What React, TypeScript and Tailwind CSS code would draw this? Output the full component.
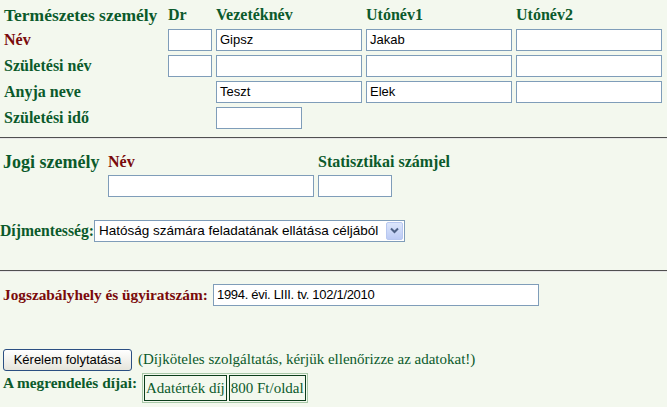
import React from "react";

const serif = "font-[family-name:Liberation_Serif,Times_New_Roman,serif]";
const sans = "font-[family-name:Liberation_Sans,Arial,sans-serif]";

function TextBox({ value = "", className = "" }: { value?: string; className?: string }) {
    return (
        <div
            className={`h-[22px] shrink-0 border border-[#7f9db9] bg-white px-[3px] text-[13px] leading-[20px] text-black ${sans} ${className}`}
        >
            {value}
        </div>
    );
}

const personRows = [
    { label: "Név", red: true, dr: true, values: ["Gipsz", "Jakab", ""] },
    { label: "Születési név", red: false, dr: true, values: ["", "", ""] },
    { label: "Anyja neve", red: false, dr: false, values: ["Teszt", "Elek", ""] },
];

export default function App() {
    return (
        <div className={`min-h-[407px] w-[667px] bg-[#f3f8ee] text-[#0b5a2b] ${serif}`}>
            {/* Természetes személy */}
            <div className="pl-[4px] pt-[3px]">
                <div className="flex h-[24px] items-center whitespace-nowrap font-bold">
                    <div className="w-[164px] text-[17.5px]">Természetes személy</div>
                    <div className="w-[48px] text-[16px]">Dr</div>
                    <div className="w-[150px] text-[16px]">Vezetéknév</div>
                    <div className="w-[150px] text-[16px]">Utónév1</div>
                    <div className="text-[16px]">Utónév2</div>
                </div>
                {personRows.map((row) => (
                    <div key={row.label} className="flex h-[26px] items-center">
                        <div className={`w-[164px] text-[16px] font-bold ${row.red ? "text-[#7a0a0a]" : ""}`}>
                            {row.label}
                        </div>
                        <div className="w-[48px]">{row.dr && <TextBox className="w-[44px]" />}</div>
                        <div className="flex gap-[4px]">
                            {row.values.map((v, i) => (
                                <TextBox key={i} value={v} className="w-[146px]" />
                            ))}
                        </div>
                    </div>
                ))}
                <div className="flex h-[26px] items-center">
                    <div className="w-[212px] text-[16px] font-bold">Születési idő</div>
                    <TextBox className="w-[86px]" />
                </div>
            </div>

            <div className="mt-[6px] h-[2px] border-t border-b border-t-[#505050] border-b-[#e6e6e6]" />

            {/* Jogi személy */}
            <div className="pl-[3px] pt-[10px]">
                <div className="flex h-[26px] items-center whitespace-nowrap font-bold">
                    <div className="w-[105px] text-[18px]">Jogi személy</div>
                    <div className="w-[210px] text-[16px] text-[#7a0a0a]">Név</div>
                    <div className="text-[16px]">Statisztikai számjel</div>
                </div>
                <div className="flex gap-[4px] pl-[105px]">
                    <TextBox className="w-[206px]" />
                    <TextBox className="w-[74px]" />
                </div>
            </div>

            <div className="flex items-center pt-[22px]">
                <div className="w-[94px] shrink-0 whitespace-nowrap text-[15.7px] font-bold">Díjmentesség:</div>
                <div
                    className={`flex h-[22px] w-[311px] items-center justify-between border border-[#7f9db9] bg-white pl-[4px] pr-[1px] text-[13.5px] text-black ${sans}`}
                >
                    <span className="whitespace-nowrap">Hatóság számára feladatának ellátása céljából</span>
                    <div className="flex h-[18px] w-[17px] items-center justify-center rounded-[2px] border border-[#b8c8f0] bg-gradient-to-b from-[#dce6fb] to-[#bccbf5]">
                        <svg width="9" height="7" viewBox="0 0 9 7">
                            <path d="M1 1.5 L4.5 5 L8 1.5" fill="none" stroke="#4d6185" strokeWidth="2" />
                        </svg>
                    </div>
                </div>
            </div>

            <div className="mt-[27px] h-[2px] border-t border-b border-t-[#505050] border-b-[#e6e6e6]" />

            <div className="flex items-center pl-[3px] pt-[12px]">
                <div className="w-[210px] shrink-0 whitespace-nowrap text-[15.3px] font-bold text-[#7a0a0a]">
                    Jogszabályhely és ügyiratszám:
                </div>
                <TextBox value="1994. évi. LIII. tv. 102/1/2010" className="w-[326px] tracking-[-0.3px]" />
            </div>

            <div className="flex items-center pl-[3px] pt-[42px]">
                <button
                    className={`h-[22px] w-[129px] rounded-[3px] border border-[#2b4f82] bg-gradient-to-b from-white to-[#e6e5dc] text-[13px] text-black ${sans}`}
                >
                    Kérelem folytatása
                </button>
                <span className="whitespace-nowrap pl-[6px] text-[15px]">
                    (Díjköteles szolgáltatás, kérjük ellenőrizze az adatokat!)
                </span>
            </div>

            <div className="flex items-start pl-[3px] pt-[2px]">
                <div className="w-[139px] shrink-0 whitespace-nowrap pt-[2px] text-[15.3px] font-bold leading-[16px]">
                    A megrendelés díjai:
                </div>
                <div className="flex gap-[2px] border border-[#a9c9a9] p-[1px]">
                    <div className="border border-[#0b3d1b] px-[1px] text-[15px] leading-[24px]">Adatérték díj</div>
                    <div className="border border-[#0b3d1b] px-[1px] text-[15px] leading-[24px]">800 Ft/oldal</div>
                </div>
            </div>
        </div>
    );
}
